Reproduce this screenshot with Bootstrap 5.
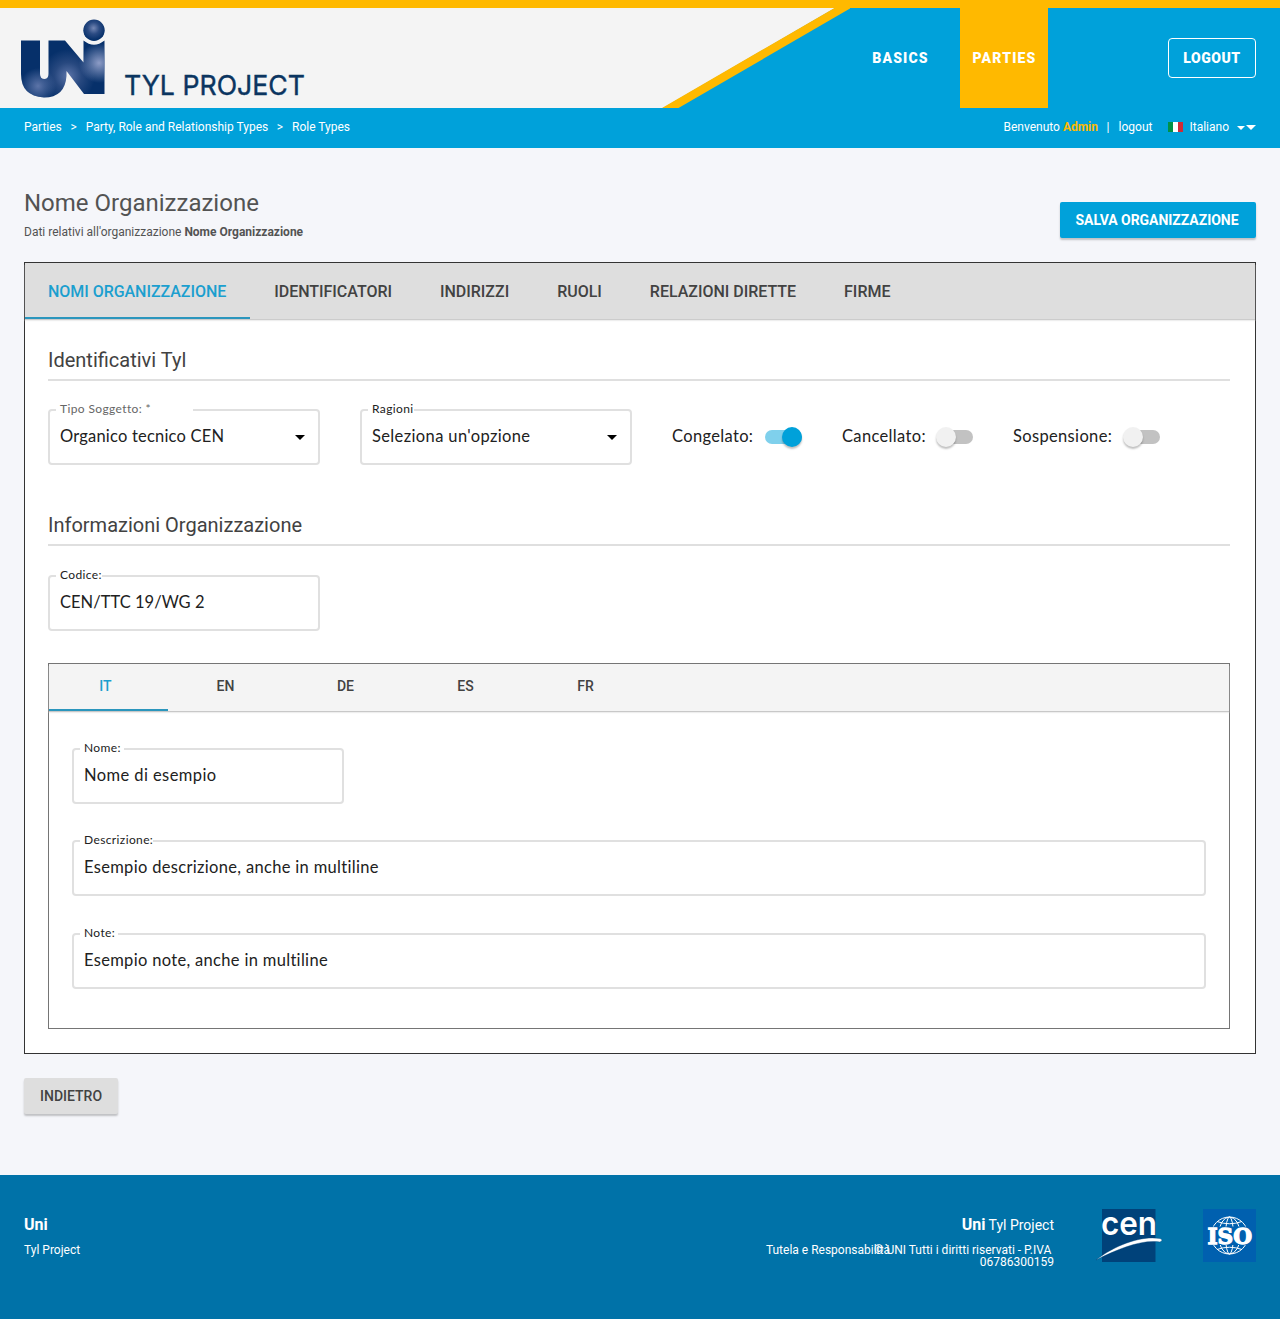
<!DOCTYPE html>
<html lang="it">
<head>
<meta charset="utf-8">
<meta name="viewport" content="width=device-width, initial-scale=1">
<title>Uni Tyl Project</title>
<link rel="stylesheet" href="https://cdn.jsdelivr.net/npm/bootstrap@5.3.0/dist/css/bootstrap.min.css">
<style>
body{font-family:Roboto,"Liberation Sans",sans-serif;background:#f5f6fa;color:#424242;font-size:12px;line-height:16px}
a{color:inherit;text-decoration:none}
.site-head{height:108px;border-top:8px solid #ffb900;background:#00a1da}
.head-art{width:850px;height:100px}
.main-menu{margin-left:-10px}
.main-menu a{height:100px;color:#fff;font-weight:900;font-size:14px;letter-spacing:1.15px}
.menu-basics{width:120px;padding-left:1px}
.menu-parties{width:88px;background:#ffb900;padding-left:1px}
.logout-btn{width:88px;height:40px;border:1px solid #fff;border-radius:4px;color:#fff;font-weight:900;font-size:14px;letter-spacing:.55px;padding:0}
.crumbs{height:40px;background:#00a1da;color:#fff;padding:0 24px 3px}
.crumb-sep{margin:0 9px 0 8.6px}
.user-name{color:#ffb900;font-weight:700}
.flag{margin:0 5px 0 16px}
.page-title{font-size:24px;line-height:32px;font-weight:400;color:#535353}
.page-sub{color:#535353;line-height:16px;margin-top:5px}
.mat-btn{height:36px;border:0;border-radius:2px;padding:0 16px;font-size:14px;box-shadow:0 2px 2px rgba(0,0,0,.22)}
.btn-save{background:#00a1da;color:#fff;font-weight:700;width:196px;white-space:nowrap;letter-spacing:-.04px;padding:0 17px 0 15px}
.btn-back{background:#dedede;color:#424242;font-weight:500;width:94px;margin-bottom:61px}
.panel{border:1px solid #333;background:#fff;height:792px}
.tabs-main{height:56px;background:#dedede;box-shadow:0 1px 0 #ccc,0 2px 1px #eee}
.tabs-main a{font-size:16px;font-weight:500;color:#424242;padding:2px 24px 0;height:56px;letter-spacing:-.015px}
.tabs-main a:first-child{padding-left:23px;letter-spacing:-.04px}
.tabs-main a.on,.tabs-lang a.on{color:#1b9fcf;box-shadow:inset 0 -2px 0 #2b96bd}
.panel-body{padding:0 25px 0 23px}
.sec-title{font-size:20px;line-height:24px;font-weight:400;color:#424242;border-bottom:2px solid #dfdfdf;padding-bottom:7px;margin:0}
.field{height:56px;border:2px solid #e0e0e0;border-radius:4px;padding:0 10px;color:#212121;font-family:Lato,sans-serif;font-size:16.5px;letter-spacing:.32px}
.field-s{width:272px}
.field-val{padding-bottom:2px}
.ls-less{letter-spacing:.02px}
.ls-more{letter-spacing:.42px}
.field-lbl{position:absolute;top:-10px;left:6px;padding-left:4px;background:#fff;font-size:12px;line-height:16px;white-space:nowrap;letter-spacing:.38px}
.w-tipo{width:137px;color:#666}
.tri{border:5px solid transparent;border-top-color:#000;border-bottom:0;margin-right:3px}
.tri-w{border:4px solid transparent;border-top-color:#fff;border-bottom:0;margin-top:2px}
.tri-l{border-width:5px;border-bottom:0}
.sw-text{font-family:Lato,sans-serif;font-size:16.5px;color:#212121;line-height:20px;white-space:nowrap;letter-spacing:.34px;padding-bottom:2px}
.sw-track{width:37px;height:14px;border-radius:7px;background:#c2c2c2}
.sw-knob{width:20px;height:20px;border-radius:50%;background:#f1f1f1;box-shadow:0 2px 2px rgba(0,0,0,.25);margin-left:-1px}
.sw-track.on{background:#7fd0ec;justify-content:flex-end}
.sw-track.on .sw-knob{background:#00a1da}
.lang-panel{border:1px solid #757575;height:366px;margin-top:32px}
.lang-body{padding:37px 23px 0}
.tabs-lang{height:47px;background:#f4f4f4;box-shadow:0 1px 0 #c8c8c8,0 2px 1px #eee}
.tabs-lang a{width:120px;height:47px;font-size:14px;font-weight:500;color:#424242;padding:0 5px 3px 0}
.tabs-lang a:first-child{width:119px;padding-right:6px}
.site-foot{background:#0072a8;height:144px;color:#fff;padding:0 24px}
.foot-strong{font-size:16px;font-weight:700}
.foot-tyl{font-size:14px}
.foot-col{padding-top:42px}
.foot-legal{margin-top:10px;line-height:12px;white-space:nowrap}
.foot-cen{margin:33px 0 0 42px;overflow:visible}
.foot-iso{margin:34px 0 0 39px}
</style>
</head>
<body>
<header>
  <div class="site-head d-flex">
    <svg class="head-art flex-shrink-0" viewBox="0 8 850 100">
      <defs>
        <radialGradient id="shine" gradientUnits="userSpaceOnUse" cx="68" cy="76" r="27"><stop offset="0" stop-color="#5c74a8"/><stop offset=".5" stop-color="#27487f"/><stop offset="1" stop-color="#06306a"/></radialGradient>
        <radialGradient id="shine2" gradientUnits="userSpaceOnUse" cx="99" cy="63" r="20"><stop offset="0" stop-color="#8d9cc6"/><stop offset="1" stop-color="#8d9cc6" stop-opacity="0"/></radialGradient>
        <radialGradient id="shine3" gradientUnits="userSpaceOnUse" cx="38" cy="86" r="18"><stop offset="0" stop-color="#5c74a8"/><stop offset="1" stop-color="#5c74a8" stop-opacity="0"/></radialGradient>
        <radialGradient id="ball" cx=".48" cy=".4" r=".55"><stop offset="0" stop-color="#7487b4"/><stop offset=".5" stop-color="#2b4b83"/><stop offset="1" stop-color="#06306a"/></radialGradient>
        <path id="mark" d="M21 40.500H40V74Q40 79 44.300 79Q48.500 79 48.500 74V40.500H65L83.500 62.500V40.500Q94 49 104.500 40.500V94H84L66.500 71V76Q65 97.500 44 97.500Q21 96 21 74Z"/>
      </defs>
      <path fill="#f4f4f4" d="M0 8H835L663 108H0Z"/>
      <path fill="#ffb900" d="M834.500 8H851L678.500 108H662Z"/>
      <use href="#mark" fill="url(#shine)"/><use href="#mark" fill="url(#shine2)"/><use href="#mark" fill="url(#shine3)"/>
      <circle cx="94" cy="30.300" r="10.700" fill="url(#ball)"/>
      <text x="124" y="95" font-family="Inter" font-size="27.500" fill="#0b3560" stroke="#0b3560" stroke-width=".4" textLength="181" lengthAdjust="spacingAndGlyphs">TYL PROJECT</text>
    </svg>
    <nav class="main-menu d-flex flex-grow-1 align-items-center">
      <a href="#" class="menu-basics d-flex align-items-center justify-content-center">BASICS</a>
      <a href="#" class="menu-parties d-flex align-items-center justify-content-center">PARTIES</a>
      <button class="logout-btn btn ms-auto me-4">LOGOUT</button>
    </nav>
  </div>
  <div class="crumbs d-flex align-items-center">
    <span>Parties</span><span class="crumb-sep">&gt;</span><span>Party, Role and Relationship Types</span><span class="crumb-sep">&gt;</span><span>Role Types</span>
    <span class="ms-auto">Benvenuto <b class="user-name">Admin</b></span>
    <span class="crumb-sep">|</span><span>logout</span>
    <svg width="15" height="10" class="flag"><rect width="5" height="10" fill="#009246"/><rect x="5" width="5" height="10" fill="#fff"/><rect x="10" width="5" height="10" fill="#ce2b37"/></svg>
    <span style="margin-left:1px">Italiano</span><i class="tri-w ms-2"></i><i class="tri-w tri-l" style="margin-left:1px"></i>
  </div>
</header>

<main class="px-4">
  <div class="d-flex justify-content-between" style="padding-top:39px;height:114px">
    <div>
      <h1 class="page-title mb-0">Nome Organizzazione</h1>
      <div class="page-sub">Dati relativi all'organizzazione <b>Nome Organizzazione</b></div>
    </div>
    <button class="mat-btn btn-save" style="margin-top:15px">SALVA ORGANIZZAZIONE</button>
  </div>

  <section class="panel">
    <nav class="tabs-main d-flex">
      <a href="#" class="on d-flex align-items-center">NOMI ORGANIZZAZIONE</a>
      <a href="#" class="d-flex align-items-center">IDENTIFICATORI</a>
      <a href="#" class="d-flex align-items-center">INDIRIZZI</a>
      <a href="#" class="d-flex align-items-center">RUOLI</a>
      <a href="#" class="d-flex align-items-center">RELAZIONI DIRETTE</a>
      <a href="#" class="d-flex align-items-center">FIRME</a>
    </nav>
    <div class="panel-body">
      <h2 class="sec-title" style="margin-top:29px">Identificativi Tyl</h2>
      <div class="d-flex align-items-center" style="margin-top:28px">
        <div class="field field-s position-relative d-flex align-items-center justify-content-between">
          <span class="field-lbl w-tipo">Tipo Soggetto: *</span><span class="field-val" style="letter-spacing:.2px">Organico tecnico CEN</span><i class="tri"></i>
        </div>
        <div class="field field-s position-relative d-flex align-items-center justify-content-between" style="margin-left:40px">
          <span class="field-lbl">Ragioni</span><span class="field-val" style="letter-spacing:.37px">Seleziona un'opzione</span><i class="tri"></i>
        </div>
        <div class="d-flex align-items-center" style="margin-left:40px;width:170px"><span class="sw-text" style="width:93px">Congelato:</span><span class="sw-track on d-flex align-items-center"><i class="sw-knob"></i></span></div>
        <div class="d-flex align-items-center" style="width:171px"><span class="sw-text" style="width:95px">Cancellato:</span><span class="sw-track d-flex align-items-center" style="width:36px"><i class="sw-knob"></i></span></div>
        <div class="d-flex align-items-center"><span class="sw-text" style="width:111px">Sospensione:</span><span class="sw-track d-flex align-items-center" style="width:36px"><i class="sw-knob"></i></span></div>
      </div>
      <h2 class="sec-title" style="margin-top:48px">Informazioni Organizzazione</h2>
      <div class="field field-s position-relative d-flex align-items-center" style="margin-top:29px">
        <span class="field-lbl">Codice:</span><span class="field-val ls-less">CEN/TTC 19/WG 2</span>
      </div>
      <div class="lang-panel">
        <nav class="tabs-lang d-flex">
          <a href="#" class="on d-flex align-items-center justify-content-center">IT</a>
          <a href="#" class="d-flex align-items-center justify-content-center">EN</a>
          <a href="#" class="d-flex align-items-center justify-content-center">DE</a>
          <a href="#" class="d-flex align-items-center justify-content-center">ES</a>
          <a href="#" class="d-flex align-items-center justify-content-center">FR</a>
        </nav>
        <div class="lang-body">
          <div class="field field-s position-relative d-flex align-items-center"><span class="field-lbl" style="padding-right:3px">Nome:</span><span class="field-val ls-more">Nome di esempio</span></div>
          <div class="field position-relative d-flex align-items-center" style="margin-top:36px"><span class="field-lbl">Descrizione:</span><span class="field-val">Esempio descrizione, anche in multiline</span></div>
          <div class="field position-relative d-flex align-items-center" style="margin-top:37px"><span class="field-lbl" style="padding-right:3px">Note:</span><span class="field-val">Esempio note, anche in multiline</span></div>
        </div>
      </div>
    </div>
  </section>
  <button class="mat-btn btn-back mt-4 d-block">INDIETRO</button>
</main>

<footer class="site-foot d-flex">
  <div class="foot-col">
    <div class="foot-strong">Uni</div>
    <div style="margin-top:9px">Tyl Project</div>
  </div>
  <div class="foot-col ms-auto text-end">
    <div><span class="foot-strong">Uni</span> <span class="foot-tyl">Tyl Project</span></div>
    <div class="foot-legal d-flex justify-content-end">
      <span style="margin-right:-16px">Tutela e Responsabilità</span>
      <span style="width:180px">© UNI Tutti i diritti riservati - P.IVA&nbsp;<br>06786300159</span>
    </div>
  </div>
  <svg class="foot-cen" width="68" height="56" viewBox="1096 1208 68 56">
    <rect x="1102" y="1209" width="53.500" height="53" fill="#00427a"/>
    <text x="1101" y="1235" font-family="Inter" font-size="33" font-weight="600" fill="#fff" textLength="56" lengthAdjust="spacingAndGlyphs">cen</text>
    <path fill="#fff" stroke="#00427a" stroke-width=".4" d="M1096 1260C1112 1247 1140 1235 1160 1238.500Q1164 1240 1160 1242C1142 1239.500 1120 1248 1096 1260Z"/>
  </svg>
  <svg class="foot-iso" width="53" height="53" viewBox="0 0 53 53">
    <rect width="53" height="53" fill="#0060af"/>
    <g fill="none" stroke="#fff" stroke-width="1"><circle cx="26.500" cy="26.500" r="18.500"/><ellipse cx="26.500" cy="26.500" rx="11" ry="18.500"/><ellipse cx="26.500" cy="26.500" rx="4" ry="18.500"/><path d="M14 12.500Q26.500 17 39 12.500M14 40.500Q26.500 36 39 40.500"/></g>
    <rect x="3" y="17.500" width="47" height="18.500" fill="#0060af"/>
    <text x="4.500" y="35" font-family="DejaVu Serif" font-weight="700" font-size="23" fill="#fff" stroke="#fff" stroke-width="1.300" textLength="44.500" lengthAdjust="spacingAndGlyphs">ISO</text>
  </svg>
</footer>
<script src="https://cdn.jsdelivr.net/npm/bootstrap@5.3.0/dist/js/bootstrap.bundle.min.js"></script>
</body>
</html>
